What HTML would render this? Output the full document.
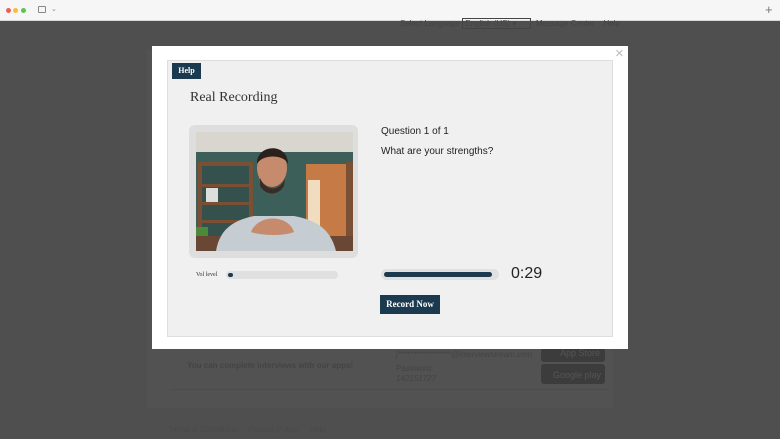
<!DOCTYPE html>
<html><head><meta charset="utf-8"><style>
*{margin:0;padding:0;box-sizing:border-box}
body{width:780px;height:439px;overflow:hidden;background:#4f4f4f;font-family:"Liberation Serif",serif;position:relative}
.bar{position:absolute;left:0;top:0;width:780px;height:21px;background:#f6f6f6;border-bottom:1px solid #d8d8d8}
.dot{position:absolute;top:8px;width:5px;height:5px;border-radius:50%}
.abs{position:absolute}
.faint{color:#444;font-size:8px;font-family:"Liberation Sans",sans-serif}
</style></head><body>
<div class="bar">
<div class="dot" style="left:6px;background:#ec5f57"></div>
<div class="dot" style="left:13px;background:#f5bd3b"></div>
<div class="dot" style="left:21px;background:#5ec44f"></div>
<div class="abs" style="left:38px;top:6px;width:8px;height:7px;border:1px solid #888;border-radius:1px"></div>
<div class="abs" style="left:51px;top:5px;font-size:7px;color:#888;font-family:'Liberation Sans'">⌄</div>
<div class="abs" style="left:765px;top:2px;font-size:13px;color:#777;font-family:'Liberation Sans'">+</div>
</div>
<div class="abs faint" style="left:400px;top:19px">Select Language <span style="border:1px solid #444;padding:0 14px 0 2px">English (US) ▾</span> &nbsp;Message Center &nbsp;&nbsp; Help</div>
<div class="abs" style="left:147px;top:50px;width:466px;height:358px;background:#525252"></div>
<div class="abs faint" style="left:187px;top:361px;font-weight:bold">You can complete interviews with our apps!</div>
<div class="abs faint" style="left:396px;top:350px;font-style:italic">j*****************@interviewstream.com</div>
<div class="abs faint" style="left:396px;top:364px">Password</div>
<div class="abs faint" style="left:396px;top:374px;font-style:italic">142151727</div>
<div class="abs" style="left:541px;top:348px;width:64px;height:14px;background:#3c3c3c;border-radius:3px;color:#555;font-size:9px;font-family:'Liberation Sans';text-align:right;padding-right:5px">App Store</div>
<div class="abs" style="left:541px;top:364px;width:64px;height:20px;background:#3c3c3c;border-radius:3px;color:#555;font-size:9px;font-family:'Liberation Sans';text-align:right;padding:6px 4px 0 0">Google play</div>
<div class="abs" style="left:170px;top:389px;width:440px;height:1px;background:#4c4c4c"></div>
<div class="abs faint" style="left:168px;top:425px;color:#4a4a4a">Terms &amp; Conditions &nbsp;&nbsp;&nbsp; Privacy Policy &nbsp;&nbsp;&nbsp; Help</div>

<div class="abs" style="left:152px;top:46px;width:476px;height:303px;background:#fff"></div>
<div class="abs" style="left:615px;top:45px;font-size:15px;color:#bbb;font-family:'Liberation Sans'">×</div>
<div class="abs" style="left:167px;top:60px;width:446px;height:277px;background:#f0f0f0;border:1px solid #dedede"></div>
<div class="abs" style="left:172px;top:63px;width:29px;height:16px;background:#1c3a4f;color:#fff;font-size:8px;font-weight:bold;text-align:center;line-height:16px">Help</div>
<div class="abs" style="left:190px;top:90px;font-size:14px;color:#333">Real Recording</div>
<div class="abs" style="left:189px;top:125px;width:169px;height:133px;background:#dedede;border-radius:6px"></div>
<svg class="abs" style="left:196px;top:132px" width="157" height="119" viewBox="0 0 157 119">
<rect width="157" height="119" fill="#3d5f5a"/>
<rect width="157" height="20" fill="#d9d6cf"/>
<rect x="2" y="30" width="55" height="80" fill="#7a4f33"/>
<rect x="6" y="34" width="47" height="70" fill="#34514d"/>
<rect x="6" y="52" width="47" height="3" fill="#7a4f33"/>
<rect x="6" y="70" width="47" height="3" fill="#7a4f33"/>
<rect x="6" y="88" width="47" height="3" fill="#7a4f33"/>
<rect x="10" y="56" width="12" height="14" fill="#ddd"/>
<rect x="110" y="32" width="40" height="80" fill="#c67b46"/>
<rect x="112" y="48" width="12" height="55" fill="#f2dcc0"/>
<rect x="150" y="30" width="7" height="80" fill="#7a4f33"/>
<rect x="0" y="95" width="12" height="24" fill="#4c8a3a"/>
<rect x="0" y="104" width="157" height="15" fill="#6a4634"/>
<path d="M20 119 C24 95 40 88 58 84 L98 84 C118 88 134 95 140 119Z" fill="#c5ccd2"/>
<ellipse cx="76" cy="36" rx="15" ry="19" fill="#c58b6c"/>
<path d="M61 32 C60 12 92 10 92 32 C88 22 66 22 61 32Z" fill="#2a211d"/>
<path d="M64 46 C70 60 84 60 89 46 L88 54 C82 64 70 64 64 54Z" fill="#3a2b24"/>
<path d="M55 100 C62 82 92 82 98 100 C88 104 66 104 55 100Z" fill="#c58b6c"/>
</svg>
<div class="abs" style="left:196px;top:272px;font-size:6px;color:#333">Vol level</div>
<div class="abs" style="left:226px;top:271px;width:112px;height:8px;background:#e0e0e0;border-radius:4px"></div>
<div class="abs" style="left:228px;top:273px;width:5px;height:4px;background:#1c3a4f;border-radius:2px"></div>
<div class="abs" style="left:381px;top:126px;font-size:10px;color:#222;font-family:'Liberation Sans',sans-serif">Question 1 of 1</div>
<div class="abs" style="left:381px;top:146px;font-size:10px;color:#222;font-family:'Liberation Sans',sans-serif">What are your strengths?</div>
<div class="abs" style="left:381px;top:269px;width:118px;height:11px;background:#e0e0e0;border-radius:6px"></div>
<div class="abs" style="left:384px;top:272px;width:108px;height:5px;background:#1c3a4f;border-radius:3px"></div>
<div class="abs" style="left:511px;top:265px;font-size:16px;color:#222;font-family:'Liberation Sans',sans-serif">0:29</div>
<div class="abs" style="left:380px;top:295px;width:60px;height:19px;background:#1c3a4f;color:#fff;font-size:9px;font-weight:bold;text-align:center;line-height:19px">Record Now</div>
</body></html>
